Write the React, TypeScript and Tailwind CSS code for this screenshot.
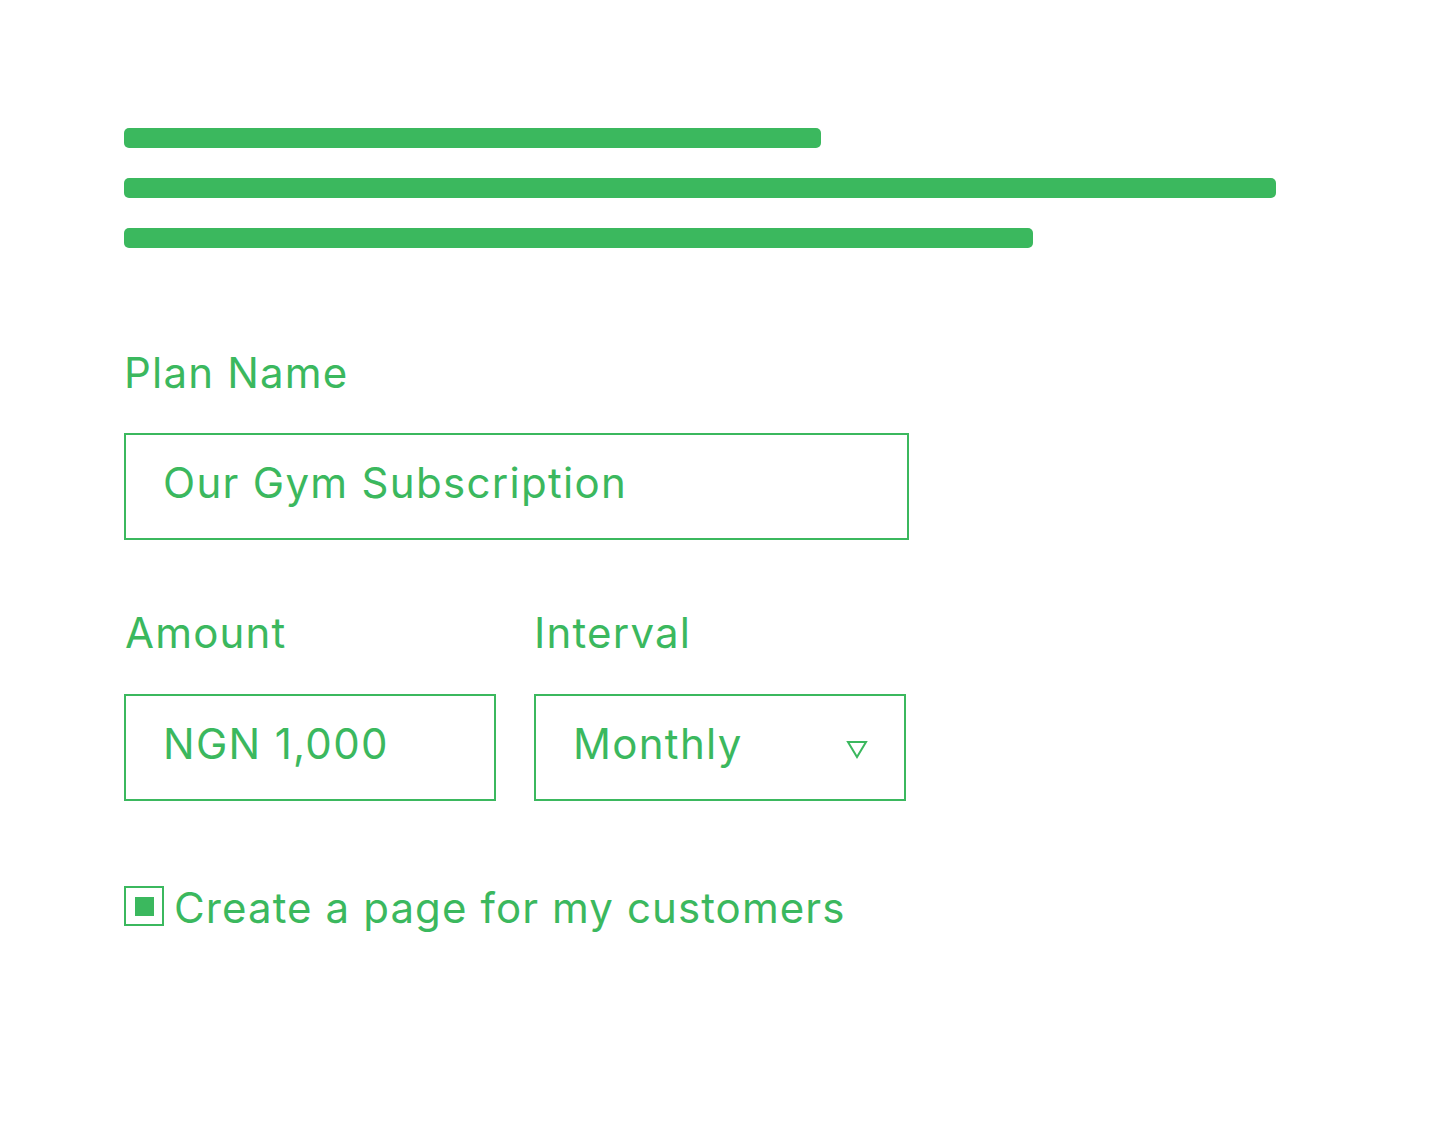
import React from "react";

const green = "text-[#3bb85e]";

function Field({ value, width, arrow }: { value: string; width: string; arrow?: boolean }) {
  return (
    <div className={`${width} h-[107px] border-2 border-[#3bb85e] flex items-center justify-between pl-[37px] pr-[36px]`}>
      <span className="text-[42px] leading-none tracking-[1.3px] pb-[8px]">{value}</span>
      {arrow && (
        <svg width="22" height="19" viewBox="0 0 22 19" className="mt-[4px]">
          <polygon points="2,2 20,2 11,17" fill="none" stroke="#3bb85e" strokeWidth="2" />
        </svg>
      )}
    </div>
  );
}

export default function App() {
  return (
    <div
      className={`w-[1436px] h-[1146px] bg-white pl-[124px] pt-[128px] ${green}`}
      style={{ fontFamily: "Inter, 'Open Sans', sans-serif" }}
    >
      {/* placeholder lines */}
      <div className="flex flex-col gap-[30px]">
        <div className="h-[20px] w-[697px] rounded-[5px] bg-[#3bb85e]" />
        <div className="h-[20px] w-[1152px] rounded-[5px] bg-[#3bb85e]" />
        <div className="h-[20px] w-[909px] rounded-[5px] bg-[#3bb85e]" />
      </div>

      {/* plan name */}
      <div className="mt-[104px] text-[42px] leading-none tracking-[1.2px]">Plan Name</div>
      <div className="mt-[39px]">
        <Field value="Our Gym Subscription" width="w-[785px]" />
      </div>

      {/* amount + interval */}
      <div className="mt-[72px] flex gap-[38px]">
        <div className="flex flex-col gap-[40px]">
          <div className="text-[42px] leading-none tracking-[1.2px] pl-[1px]">Amount</div>
          <Field value="NGN 1,000" width="w-[372px]" />
        </div>
        <div className="flex flex-col gap-[40px]">
          <div className="text-[42px] leading-none tracking-[1.2px]">Interval</div>
          <Field value="Monthly" width="w-[372px]" arrow />
        </div>
      </div>

      {/* checkbox */}
      <div className="mt-[85px] flex items-start gap-[10px]">
        <div className="w-[40px] h-[40px] border-2 border-[#3bb85e] flex items-center justify-center">
          <div className="w-[19px] h-[19px] bg-[#3bb85e]" />
        </div>
        <span className="text-[42px] leading-none tracking-[1.1px] mt-[1px]">Create a page for my customers</span>
      </div>
    </div>
  );
}
